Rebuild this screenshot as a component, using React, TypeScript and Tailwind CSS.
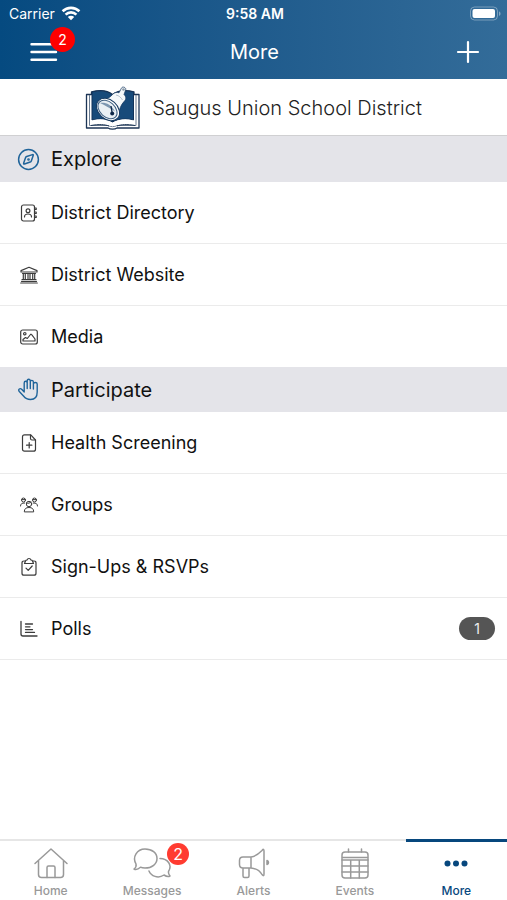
import React, { ReactNode } from "react";

interface IconProps {
  size?: string;
  box?: string;
  width?: number;
  children: ReactNode;
}

function Icon({ size = "w-5 h-5", box = "0 0 20 20", width = 1.2, children }: IconProps) {
  return (
    <svg
      className={size}
      viewBox={box}
      fill="none"
      stroke="currentColor"
      strokeWidth={width}
      strokeLinecap="round"
      strokeLinejoin="round"
      aria-hidden="true"
    >
      {children}
    </svg>
  );
}

function WifiIcon() {
  return (
    <svg className="w-5 h-4" viewBox="0 0 20 16" fill="none" stroke="white" strokeWidth="2.6" aria-hidden="true">
      <path d="M1.600 5.300a12 12 0 0 1 16.800 0" />
      <path d="M4.600 8.600a7.700 7.700 0 0 1 10.800 0" />
      <path d="M10 14.300l-3.200-3.300a4.600 4.600 0 0 1 6.400 0z" fill="white" stroke="none" />
    </svg>
  );
}

function BatteryIcon() {
  return (
    <svg className="w-8 h-4" viewBox="0 0 32 16" aria-hidden="true">
      <rect x="1.500" y="1" width="27" height="13" rx="4" fill="none" stroke="white" strokeOpacity=".35" />
      <rect x="3.500" y="3" width="22.500" height="9" rx="2" fill="white" />
      <path d="M30 5.500v4.400c1-.4 1.500-1.200 1.500-2.200S31 5.900 30 5.500z" fill="white" fillOpacity=".4" />
    </svg>
  );
}

function SchoolLogo() {
  return (
    <svg className="w-14 h-11" viewBox="0 0 56 44" strokeLinejoin="round" aria-hidden="true">
      <path d="M1.500 8.500h5V6c8-2 16-1.500 21 2.500C33 4.500 41 4 49 6v2.500h5V42H32c-2 1.500-7 1.500-9 0H1.500z" fill="#fff" stroke="#1c3556" strokeWidth="1.300" />
      <path d="M4.500 9v30.500H23c3 1.500 6 1.500 9 0h19V9" fill="none" stroke="#6a7b90" strokeWidth="1" />
      <path d="M7 6c8-2 15-1.500 20.500 3v27C22 32.500 14 32.500 7 34z" fill="#174a7a" stroke="#12335a" />
      <path d="M48.500 6c-8-2-15-1.500-21 3v27c6-3.500 14-3.500 21-2z" fill="#174a7a" stroke="#12335a" />
      <path d="M7 35.500c8-2.500 15-1.500 20.500 2.500 6-4 13-5 21-2.500M6 38c8-1.500 15-1 21.500 1.500C34 37 41 36.500 50 38" fill="none" stroke="#fff" strokeWidth="1.600" />
      <path d="M6 39.500c8-1.500 14-1 18 .5M50 39.500c-8-1.500-14-1-18 .5" fill="none" stroke="#1c3556" strokeWidth="1" />
      <path d="M14 15c6-1 11-3 14-7 1.500-1.500 4-2 6-1.200L36.500 2c1-2 5-.5 4.200 1.800L39 8.500c2 1.800 2.500 4.500.5 6.500-4 4-5.500 9-6.500 16z" fill="#f5f8fa" stroke="#173a61" strokeWidth=".7" />
      <path d="M31 9c3 .5 5 2.500 6.500 5" fill="none" stroke="#a3b3c2" strokeWidth=".8" />
      <circle cx="38.500" cy="3.500" r="1.300" fill="#8998a7" />
      <ellipse cx="23" cy="23.500" rx="13" ry="9.500" transform="rotate(42 23 23.500)" fill="#fff" stroke="#173a61" />
      <ellipse cx="22.500" cy="23.500" rx="11" ry="7.500" transform="rotate(42 22.500 23.500)" fill="#eaf0f4" stroke="#3c5e81" />
      <path d="M15 17c5-1 11 1 15 8.500-6-4-10-6-15-8.500z" fill="#7d97b0" />
      <path d="M26 20l1 6" stroke="#0e2748" strokeWidth="1.300" />
      <circle cx="27.200" cy="27.500" r="2" fill="#0e2748" />
    </svg>
  );
}

const compass = (
  <Icon size="w-[23px] h-[23px]" box="0 0 23 23" width={1.5}>
    <circle cx="11.500" cy="11.500" r="9.900" />
    <path d="M15.500 6.600 9.700 8.500q-.8.300-1.100 1.100l-1.900 5.500q-.4 1.200.8.900l5.700-2q.8-.3 1.100-1.100l1.900-5.400q.4-1.200-.7-.9z" />
    <circle cx="11.500" cy="11.500" r=".6" />
  </Icon>
);

const hand = (
  <Icon size="w-[23px] h-[23px]" box="0 0 23 23" width={1.400}>
    <path d="M7.200 14V5q0-1.700 1.500-1.700T10.200 5v5.500M10.200 10.500V3q0-1.700 1.500-1.700T13.300 3v7.500M13.300 10.500V4q0-1.600 1.500-1.600T16.400 4v7M16.400 11V6q0-1.500 1.900-1.500T20.200 6v8c0 5-2 7.500-6.700 7.500-3.500 0-5-1-7-3.500L2.300 13.500q-1.200-1.600 0-2.500t2.600.5L7.200 14" />
  </Icon>
);

const directory = (
  <Icon>
    <rect x="2.500" y="2" width="13" height="16" rx="2" />
    <circle cx="9" cy="7.800" r="1.900" />
    <path d="M5.500 14c0-2 1.500-3 3.500-3s3.500 1 3.500 3M15.500 5h1.700v1.500h-1.700M15.500 9h1.700v1.500h-1.700M15.500 13h1.700v1.500h-1.700" />
  </Icon>
);

const building = (
  <Icon>
    <path d="M2 7V5.600l8-3.300 8 3.300V7zM3.500 8.500h13M4.300 9v5M6.300 9v5M9 9v5M11 9v5M13.700 9v5M15.700 9v5M3 14.500h14M2.500 16.300h15M1.700 18h16.600" />
  </Icon>
);

const media = (
  <Icon>
    <rect x="1.700" y="3" width="16.600" height="14" rx="2" />
    <circle cx="5.800" cy="6.700" r="1.200" />
    <path d="M4 14v-1.500l2.500-2 1.800 1L11.500 7.500q.7-.6 1.200.1L16 12v2z" />
  </Icon>
);

const health = (
  <Icon>
    <path d="M5.500 1.800h6.300L16.500 7v9.200q0 2-2 2h-9q-2 0-2-2V3.800q0-2 2-2z" />
    <path d="M11.500 2v3.500q0 1.500 1.500 1.500h3.500M10.200 9.500v5.400M7.500 12.200h5.400" />
  </Icon>
);

const groups = (
  <Icon width={1}>
    <circle cx="10" cy="9" r="2.700" />
    <path d="M5.300 16.500c0-2.800 1.700-4 4.700-4s4.700 1.200 4.700 4zM7.500 8.200c1.800.4 3.500-.2 4.500-1.200" />
    <circle cx="4.500" cy="5" r="2" />
    <circle cx="15.500" cy="5" r="2" />
    <path d="M1.500 11c0-2 1.200-3.200 4.200-3M18.500 11c0-2-1.200-3.200-4.200-3M3 4.600h3M14 4.600h3" />
  </Icon>
);

const clipboard = (
  <Icon>
    <path d="M6 4H5Q3 4 3 6v10.200q0 2 2 2h10q2 0 2-2V6q0-2-2-2h-1" />
    <path d="M5.500 6.500 6.500 4q.4-1 1.500-1 .5-1.500 2-1.500T12 3q1.100 0 1.500 1l1 2.500zM7 11.200l2.200 2.200 4-4.400" />
  </Icon>
);

const polls = (
  <Icon width={1.300}>
    <path d="M2 2.500V15q0 2 2 2h14M6.500 5h7M6.500 7.800h4.500M6.500 10.600h7M6.500 13.400h9" />
  </Icon>
);

interface MenuItem {
  name: string;
  icon: ReactNode;
  count?: number;
}

const exploreItems: MenuItem[] = [
  { name: "District Directory", icon: directory },
  { name: "District Website", icon: building },
  { name: "Media", icon: media },
];

const participateItems: MenuItem[] = [
  { name: "Health Screening", icon: health },
  { name: "Groups", icon: groups },
  { name: "Sign-Ups & RSVPs", icon: clipboard },
  { name: "Polls", icon: polls, count: 1 },
];

function Section(p: { title: string; icon: ReactNode; items: MenuItem[] }) {
  return (
    <section className="group">
      <h2 className="flex items-center h-[46px] pl-[17px] gap-[11px] bg-[#e4e4e9] text-xl text-[#111] group-last:h-[45px]">
        <span className="text-[#20649a]">{p.icon}</span>
        {p.title}
      </h2>
      <ul className="divide-y divide-[#ebebeb] group-last:border-b group-last:border-[#ebebeb]">
        {p.items.map((v) => (
          <li key={v.name}>
            <a href="#" className="flex items-center h-[61px] pl-[19px] pr-3 text-lg text-[#111]">
              <span className="w-8 text-[#3c3c3c]">{v.icon}</span>
              <span className="flex-1">{v.name}</span>
              {v.count && (
                <span className="w-9 h-[23px] rounded-full bg-[#555] text-[#eee] text-sm leading-[23px] text-center">
                  {v.count}
                </span>
              )}
            </a>
          </li>
        ))}
      </ul>
    </section>
  );
}

interface TabProps {
  name: string;
  active?: boolean;
  count?: number;
  children: ReactNode;
}

function Tab(p: TabProps) {
  return (
    <a
      href="#"
      className={
        "flex-1 flex flex-col items-center text-xs font-medium " +
        (p.active ? "border-t-3 border-[#07477d] pt-1 text-[#07477d]" : "border-t-2 border-[#e6e6e6] pt-[5px] text-[#999]")
      }
    >
      <span className="relative h-[37px]">
        {p.children}
        {p.count && (
          <span className="absolute -top-[3px] -right-[17px] w-[22px] h-[22px] rounded-full bg-[#ff3b30] text-white text-base font-normal leading-[22px] text-center">
            {p.count}
          </span>
        )}
      </span>
      <span className="leading-4">{p.name}</span>
    </a>
  );
}

export default function App() {
  return (
    <div className="min-h-screen flex flex-col bg-white font-['Inter','Liberation_Sans',sans-serif]">
      <header className="bg-linear-to-r from-[#054a80] to-[#336c99] text-white">
        <div className="grid grid-cols-3 items-center h-[27px] pl-[9px] pr-[6px] text-sm">
          <div className="flex items-center gap-[6px]">
            <span>Carrier</span>
            <WifiIcon />
          </div>
          <div className="text-center text-sm font-semibold">9:58 AM</div>
          <div className="flex justify-end">
            <BatteryIcon />
          </div>
        </div>
        <div className="grid grid-cols-3 items-center h-[52px] pl-[29px] pr-[27px] pb-[2px]">
          <button className="relative justify-self-start" aria-label="Menu">
            <Icon size="w-[30px] h-6" box="0 0 30 24" width={2.400}>
              <path d="M2.500 4.300h24.500M2.500 12h24.500M2.500 19.700h24.500" />
            </Icon>
            <span className="absolute -top-[13px] left-[21px] w-[25px] h-[25px] rounded-full bg-[#ff0000] text-sm leading-[25px] text-center">
              2
            </span>
          </button>
          <h1 className="text-center text-xl">More</h1>
          <button className="justify-self-end" aria-label="Add">
            <Icon size="w-6 h-6" box="0 0 24 24" width={2.200}>
              <path d="M12 2v20M2 12h20" />
            </Icon>
          </button>
        </div>
      </header>
      <div className="flex items-center justify-center gap-[11px] h-[57px] pt-[2px] border-b border-[#d0d0d2] text-xl font-light text-[#222]">
        <SchoolLogo />
        <span>Saugus Union School District</span>
      </div>
      <main className="flex-1">
        <Section title="Explore" icon={compass} items={exploreItems} />
        <Section title="Participate" icon={hand} items={participateItems} />
      </main>
      <nav className="flex h-[61px]">
        <Tab name="Home">
          <Icon size="w-9 h-9" box="0 0 36 36" width={1.500}>
            <path d="M2 17.500 18 3l16 14.500M5.500 15v13.500q0 3 3 3h19q3 0 3-3V15" />
            <path d="M14 31.500V21.500q0-1.500 1.500-1.500h5q1.500 0 1.500 1.500v10" />
          </Icon>
        </Tab>
        <Tab name="Messages" count={2}>
          <Icon size="w-10 h-9" box="0 0 40 36" width={1.500}>
            <path d="M2 23c2-1.500 2.500-3 2-5C0 11 5 3 13 3c7 0 12 4 12 9.500S20 22 13 22c-2 0-3.500-.3-4.500-.8C6.500 23 4 24 2 23z" />
            <path d="M28 12.500c8 0 12.500 7 8.500 13-.3 2 .3 3 1.500 4.500-2 1-4 .3-6-1-6 4-13 1-15-4" />
          </Icon>
        </Tab>
        <Tab name="Alerts">
          <Icon size="w-9 h-9" box="0 0 36 36" width={1.500}>
            <path d="M15 11H7q-3.500 0-3.500 3.500v4Q3.500 22 7 22h8zM15 11c5-.5 8-3.500 11-6.500q2-2.500 2 .5v23q0 3-2 .5C24 25 20 22.500 15 22M7 22v8q0 1.500 1.500 1.500h3q1.500 0 1.500-1.500v-8" />
            <path d="M31 14.500v4q1.500-.5 1.500-2t-1.500-2z" fill="currentColor" />
          </Icon>
        </Tab>
        <Tab name="Events">
          <Icon size="w-9 h-9" box="0 0 36 36" width={1.500}>
            <rect x="5" y="6" width="26" height="26" rx="3" />
            <path d="M5 14h26M5 20h26M5 26h26M13.700 14v18M22.300 14v18M5.500 11.500h25M11.500 3v3M24.500 3v3" />
          </Icon>
        </Tab>
        <Tab name="More" active>
          <svg className="w-9 h-9" viewBox="0 0 36 36" fill="currentColor" aria-hidden="true">
            <circle cx="9.500" cy="17.500" r="3" />
            <circle cx="18" cy="17.500" r="3" />
            <circle cx="26.500" cy="17.500" r="3" />
          </svg>
        </Tab>
      </nav>
    </div>
  );
}
